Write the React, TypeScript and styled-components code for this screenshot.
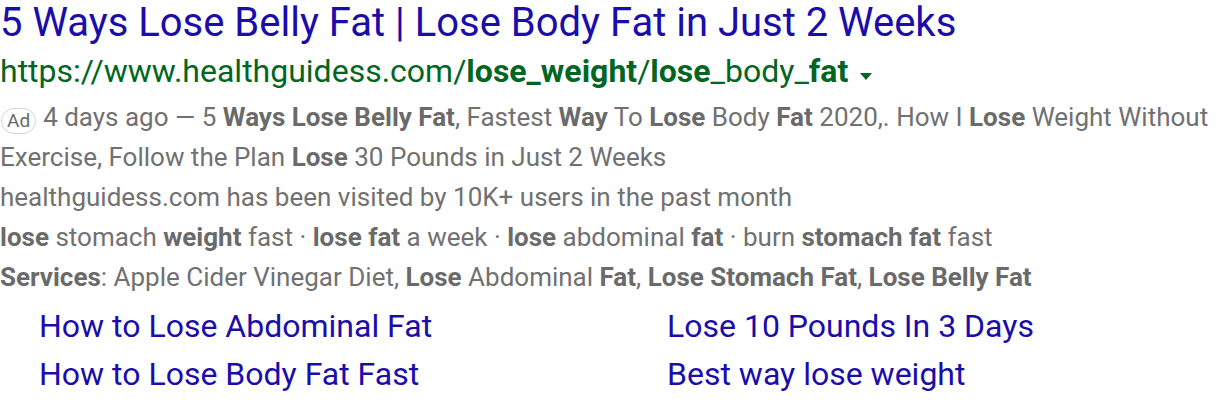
import React from "react";
import styled, { createGlobalStyle } from "styled-components";

const GlobalStyle = createGlobalStyle`
  body {
    margin: 0;
    background: #ffffff;
    font-family: Roboto, "Liberation Sans", Arial, sans-serif;
  }
`;

const Result = styled.div`
  width: 1216px;
`;

const Title = styled.a`
  display: block;
  font-size: 40px;
  line-height: 46px;
  color: #1a0dab;
  text-decoration: none;
  white-space: nowrap;
`;

const UrlLine = styled.div`
  display: flex;
  align-items: center;
  font-size: 32px;
  line-height: 51px;
  color: #006621;
  white-space: nowrap;
  b {
    font-weight: 700;
  }
`;

const Caret = styled.span`
  display: inline-block;
  width: 0;
  height: 0;
  margin-left: 12px;
  margin-top: 10px;
  border-left: 6.5px solid transparent;
  border-right: 6.5px solid transparent;
  border-top: 7px solid #006621;
`;

const Snippet = styled.div`
  font-size: 26px;
  line-height: 40px;
  color: #717171;
  b {
    font-weight: 700;
    color: #6a6a6a;
  }
`;

const AdBadge = styled.span`
  display: inline-block;
  box-sizing: border-box;
  height: 26px;
  line-height: 24px;
  padding: 0 5px;
  margin: 0 7px 0 1px;
  border: 1px solid #d4d4d4;
  border-radius: 13px;
  font-size: 19px;
  color: #6a6a6a;
  vertical-align: -1px;
`;

const Sitelinks = styled.div`
  display: grid;
  grid-template-columns: 628px 1fr;
  padding-left: 39px;
  margin-top: 5px;
`;

const Sitelink = styled.a`
  font-size: 32px;
  line-height: 48px;
  color: #1a0dab;
  text-decoration: none;
  white-space: nowrap;
`;

const links = [
  "How to Lose Abdominal Fat",
  "Lose 10 Pounds In 3 Days",
  "How to Lose Body Fat Fast",
  "Best way lose weight",
];

export default function App() {
  return (
    <>
      <GlobalStyle />
      <Result>
        <Title href="#">5 Ways Lose Belly Fat | Lose Body Fat in Just 2 Weeks</Title>
        <UrlLine>
          <span>
            https://www.healthguidess.com/<b>lose_weight</b>/<b>lose</b>_body_<b>fat</b>
          </span>
          <Caret />
        </UrlLine>
        <Snippet>
          <div>
            <AdBadge>Ad</AdBadge>4 days ago — 5 <b>Ways Lose Belly Fat</b>, Fastest <b>Way</b> To{" "}
            <b>Lose</b> Body <b>Fat</b> 2020,. How I <b>Lose</b> Weight Without Exercise, Follow the
            Plan <b>Lose</b> 30 Pounds in Just 2 Weeks
          </div>
          <div>healthguidess.com has been visited by 10K+ users in the past month</div>
          <div>
            <b>lose</b> stomach <b>weight</b> fast · <b>lose fat</b> a week · <b>lose</b> abdominal{" "}
            <b>fat</b> · burn <b>stomach fat</b> fast
          </div>
          <div>
            <b>Services</b>: Apple Cider Vinegar Diet, <b>Lose</b> Abdominal <b>Fat</b>,{" "}
            <b>Lose Stomach Fat</b>, <b>Lose Belly Fat</b>
          </div>
        </Snippet>
        <Sitelinks>
          {links.map((l) => (
            <Sitelink key={l} href="#">
              {l}
            </Sitelink>
          ))}
        </Sitelinks>
      </Result>
    </>
  );
}
